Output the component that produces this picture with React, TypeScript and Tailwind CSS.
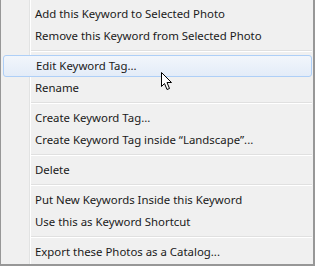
import React from 'react';

type Entry = { label: string } | 'sep';

const entries: Entry[] = [
  { label: 'Add this Keyword to Selected Photo' },
  { label: 'Remove this Keyword from Selected Photo' },
  'sep',
  { label: 'Edit Keyword Tag...' },
  { label: 'Rename' },
  'sep',
  { label: 'Create Keyword Tag...' },
  { label: 'Create Keyword Tag inside \u201cLandscape\u201d...' },
  'sep',
  { label: 'Delete' },
  'sep',
  { label: 'Put New Keywords Inside this Keyword' },
  { label: 'Use this as Keyword Shortcut' },
  'sep',
  { label: 'Export these Photos as a Catalog...' },
];

const Pointer: React.FC = () => (
  <svg
    width="13"
    height="20"
    viewBox="0 0 13 20"
    className="absolute left-[160px] top-[71px]"
  >
    <path
      d="M1.5 1.5 L1.5 15.5 L4.5 12.5 L7 18.5 L9.5 17.5 L7 11.5 L11.5 11.5 Z"
      fill="#fff"
      stroke="#000"
      strokeWidth="1"
      strokeLinejoin="miter"
    />
  </svg>
);

export default function App() {
  return (
    <div className="relative w-[315px] h-[266px] overflow-hidden bg-[#f0f0f0]">
      <div
        className="h-full border-l border-b-2 border-r-2 border-[#979797] pt-[3px] pl-[2px] pr-[1px] bg-[linear-gradient(to_right,#f0f0f0_28px,#e2e3e3_28px,#e2e3e3_29px,#ffffff_29px,#ffffff_30px,#f0f0f0_30px)]"
        style={{ fontFamily: '"Noto Sans", "Liberation Sans", sans-serif' }}
      >
        {entries.map((e, i) =>
          e === 'sep' ? (
            <div key={i} className="h-[8px] pl-[28px] flex flex-col justify-center">
              <div className="h-px bg-[#e0e0e0]" />
              <div className="h-px bg-white" />
            </div>
          ) : (
            <div
              key={i}
              className={`h-[22px] flex items-center pl-[32px] text-[11.4px] text-[#1a1a1a] whitespace-nowrap ${
                e.label === 'Edit Keyword Tag...'
                  ? 'rounded-[3px] border border-[#aecff7] bg-[linear-gradient(to_bottom,#f2f6fb,#e3ecf8)] pl-[31px]'
                  : ''
              }`}
            >
              {e.label}
            </div>
          )
        )}
      </div>
      <Pointer />
    </div>
  );
}
